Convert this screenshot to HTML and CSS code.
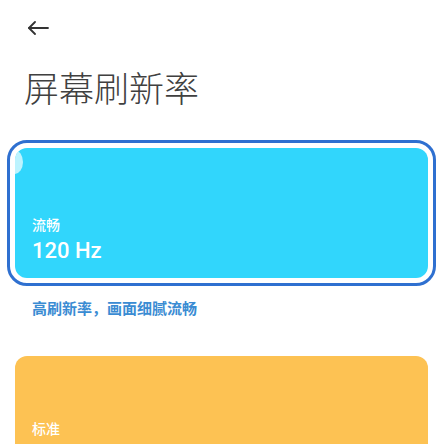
FILE: index.html
```html
<!DOCTYPE html>
<html lang="zh-CN">
<head>
<meta charset="utf-8">
<link rel="stylesheet" href="styles.css">
</head>
<body>
<div class="page">
  <div class="topbar">
    <svg class="back" width="22" height="14" viewBox="0 0 22 14" fill="none" stroke="#333" stroke-width="1.8" stroke-linecap="round" stroke-linejoin="round">
      <path d="M21 7H2"/>
      <path d="M8 1L2 7L8 13"/>
    </svg>
  </div>
  <h1 class="title">屏幕刷新率</h1>
  <div class="option selected">
    <div class="card cyan">
      <span class="bubble"></span>
      <div class="label">流畅</div>
      <div class="value">120 Hz</div>
    </div>
  </div>
  <div class="desc">高刷新率，画面细腻流畅</div>
  <div class="option plain">
    <div class="card orange">
      <div class="label">标准</div>
    </div>
  </div>
</div>
</body>
</html>
```
FILE: styles.css
```css
html, body {
  margin: 0;
  padding: 0;
  background: #ffffff;
  overflow: hidden;
}
body {
  font-family: "Noto Sans CJK SC", "Noto Sans", sans-serif;
  width: 436px;
  height: 444px;
}
.page {
  display: flex;
  flex-direction: column;
}
.topbar {
  height: 56px;
  display: flex;
  align-items: center;
  padding-left: 27px;
}
.back {
  display: block;
}
.title {
  margin: 13px 0 0 24px;
  font-size: 35px;
  line-height: 35px;
  font-weight: 300;
  color: #404040;
}
.option {
  box-sizing: border-box;
  width: 429px;
  margin-left: 7px;
  border-radius: 20px;
  border: 3px solid transparent;
  padding: 5px;
}
.option.selected {
  margin-top: 36px;
  border-color: #2f70d0;
}
.option.plain {
  margin-top: 30px;
}
.card {
  position: relative;
  overflow: hidden;
  height: 130px;
  border-radius: 12px;
  display: flex;
  flex-direction: column;
  justify-content: flex-end;
  padding: 0 0 12px 17px;
  box-sizing: border-box;
  color: #ffffff;
}
.cyan {
  background: #31d6fc;
}
.orange {
  background: #fdc253;
  height: 140px;
  padding-bottom: 0;
  justify-content: flex-start;
  padding-top: 62px;
}
.bubble {
  position: absolute;
  left: -9px;
  top: 2px;
  width: 17px;
  height: 24px;
  border-radius: 50%;
  background: rgba(235, 252, 255, 0.75);
}
.label {
  font-size: 14px;
  line-height: 20px;
  font-weight: 500;
}
.value {
  font-family: Roboto, "Noto Sans", sans-serif;
  font-size: 22px;
  line-height: 30px;
  font-weight: 500;
  margin-top: 2px;
}
.desc {
  margin: 12px 0 0 32px;
  font-size: 15px;
  line-height: 20px;
  font-weight: 700;
  color: #3a8cd3;
}
```
